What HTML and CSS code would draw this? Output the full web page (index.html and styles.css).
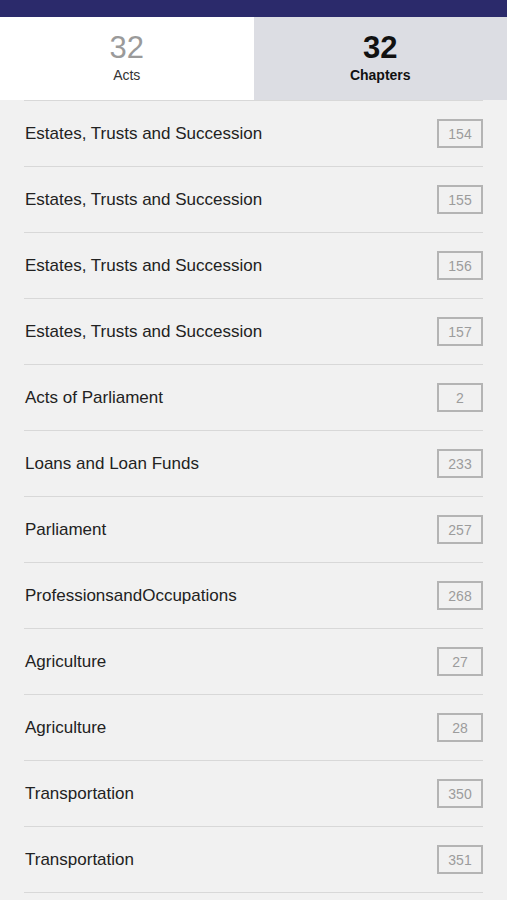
FILE: index.html
```html
<!DOCTYPE html>
<html>
<head>
  <title>Chapters</title>
  <link rel="stylesheet" href="styles.css">
</head>
<body>

  <div class="topbar"></div>

  <div class="tabs">
    <div class="tab">
      <div class="tab-count">32</div>
      <div class="tab-label">Acts</div>
    </div>
    <div class="tab tab-active">
      <div class="tab-count">32</div>
      <div class="tab-label">Chapters</div>
    </div>
  </div>

  <div class="chapter-list">
    <div class="chapter-row"><span class="chapter-name">Estates, Trusts and Succession</span><span class="chapter-no">154</span></div>
    <div class="chapter-row"><span class="chapter-name">Estates, Trusts and Succession</span><span class="chapter-no">155</span></div>
    <div class="chapter-row"><span class="chapter-name">Estates, Trusts and Succession</span><span class="chapter-no">156</span></div>
    <div class="chapter-row"><span class="chapter-name">Estates, Trusts and Succession</span><span class="chapter-no">157</span></div>
    <div class="chapter-row"><span class="chapter-name">Acts of Parliament</span><span class="chapter-no">2</span></div>
    <div class="chapter-row"><span class="chapter-name">Loans and Loan Funds</span><span class="chapter-no">233</span></div>
    <div class="chapter-row"><span class="chapter-name">Parliament</span><span class="chapter-no">257</span></div>
    <div class="chapter-row"><span class="chapter-name">ProfessionsandOccupations</span><span class="chapter-no">268</span></div>
    <div class="chapter-row"><span class="chapter-name">Agriculture</span><span class="chapter-no">27</span></div>
    <div class="chapter-row"><span class="chapter-name">Agriculture</span><span class="chapter-no">28</span></div>
    <div class="chapter-row"><span class="chapter-name">Transportation</span><span class="chapter-no">350</span></div>
    <div class="chapter-row"><span class="chapter-name">Transportation</span><span class="chapter-no">351</span></div>
  </div>

</body>
</html>
```

FILE: styles.css
```css
body {
    margin: 0;
    background: #f1f1f1;
    font-family: "Liberation Sans", Arial, sans-serif;
    overflow: hidden;
}

.topbar {
    height: 17px;
    background: #2b2a6b;
}

.tabs {
    display: flex;
    height: 83px;
}

.tab {
    flex: 1;
    background: #ffffff;
    display: flex;
    flex-direction: column;
    align-items: center;
    padding-top: 14px;
    box-sizing: border-box;
}

.tab-active {
    background: #dcdde3;
}

.tab-count {
    font-size: 31px;
    line-height: 34px;
    color: #9a9a9a;
}

.tab-label {
    font-size: 14px;
    line-height: 18px;
    margin-top: 1px;
    color: #333;
}

.tab-active .tab-count,
.tab-active .tab-label {
    color: #111;
    font-weight: bold;
}

.chapter-list {
    margin: 0 24px;
    border-bottom: 1px solid #d8d8d8;
}

.chapter-row {
    height: 66px;
    box-sizing: border-box;
    border-top: 1px solid #d8d8d8;
    display: flex;
    align-items: center;
    justify-content: space-between;
    padding-left: 1px;
}

.chapter-name {
    font-size: 17px;
    color: #222;
}

.chapter-no {
    width: 46px;
    height: 29px;
    box-sizing: border-box;
    border: 2px solid #b4b4b4;
    display: flex;
    align-items: center;
    justify-content: center;
    font-size: 14px;
    color: #9c9c9c;
}
```
